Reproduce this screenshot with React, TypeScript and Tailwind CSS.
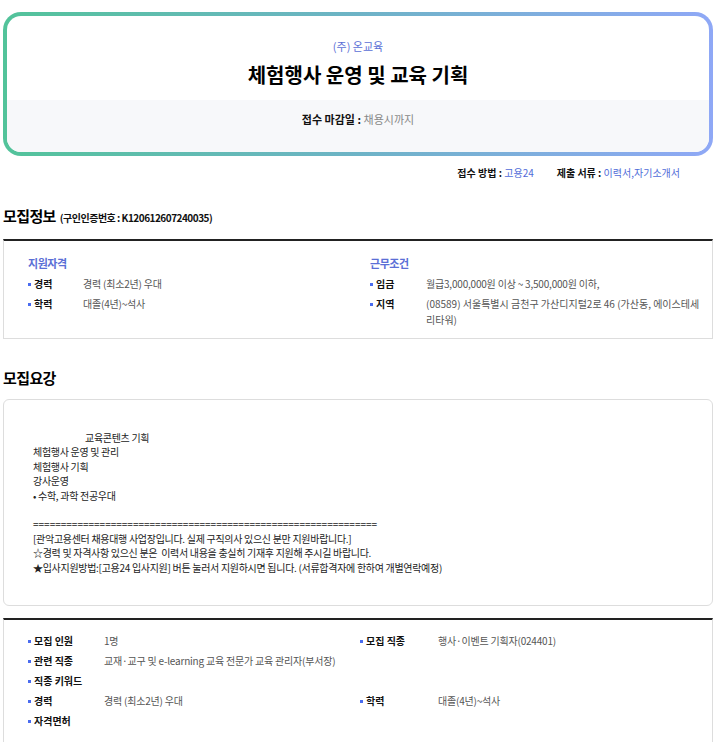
const font = { fontFamily: '"Noto Sans CJK KR", "Noto Sans", sans-serif' };

function Bullet() {
  return <span className="inline-block w-[3px] h-[3px] bg-[#4a6cf0] mr-[3px] align-middle" />;
}

function InfoRow({ label, value, labelW }: { label: string; value?: string; labelW: string }) {
  return (
    <div className="flex items-start leading-[20px]">
      <div className={`${labelW} shrink-0 font-bold text-[#111] flex items-center`}>
        <Bullet />
        <span>{label}</span>
      </div>
      {value && <div className="text-[#555] tracking-[-0.02em]">{value}</div>}
    </div>
  );
}

export default function App() {
  return (
    <div className="bg-white min-h-screen" style={font}>
      <div className="w-[710px] ml-[3px] pt-[12px]">
        {/* 상단 카드 */}
        <div className="rounded-[18px] p-[4px] bg-linear-to-r from-[#52c39a] via-[#6db3c6] to-[#8fa8f6]">
          <div className="rounded-[14px] overflow-hidden bg-white">
            <div className="flex flex-col items-center pt-[23px] pb-[11px]">
              <p className="text-[11px] leading-[14px] text-[#5b6fd6]">(주) 온교육</p>
              <h1 className="mt-[8px] text-[20px] leading-[28px] font-bold text-black">
                체험행사 운영 및 교육 기획
              </h1>
            </div>
            <div className="bg-[#f7f8fa] h-[52px] pt-[12px] text-center text-[11px] leading-[14px]">
              <span className="font-bold text-[#111]">접수 마감일 : </span>
              <span className="text-[#888]">채용시까지</span>
            </div>
          </div>
        </div>

        {/* 접수 방법 */}
        <div className="flex justify-end gap-[23px] pr-[33px] mt-[10px] text-[10px] leading-[14px]">
          <div>
            <span className="font-bold text-[#111]">접수 방법 : </span>
            <span className="text-[#4f6bd8]">고용24</span>
          </div>
          <div>
            <span className="font-bold text-[#111]">제출 서류 : </span>
            <span className="text-[#4f6bd8]">이력서,자기소개서</span>
          </div>
        </div>

        {/* 모집정보 */}
        <div className="flex items-baseline gap-[4px] mt-[25px]">
          <h2 className="text-[15px] leading-[22px] font-bold text-black tracking-[-0.04em]">모집정보</h2>
          <span className="text-[10px] font-bold text-[#111] tracking-[-0.05em]">(구인인증번호 : K120612607240035)</span>
        </div>
        <div className="mt-[12px] border-t-2 border-t-[#222] border-x border-b border-[#ddd] h-[100px] grid grid-cols-[342px_1fr] pl-[24px] pr-[12px] pt-[14px] text-[10px]">
          <div>
            <h3 className="text-[11px] leading-[16px] font-bold text-[#5b6fd6] mb-[3px] tracking-[-0.04em]">지원자격</h3>
            <InfoRow label="경력" value="경력 (최소2년) 우대" labelW="w-[55px]" />
            <InfoRow label="학력" value="대졸(4년)~석사" labelW="w-[55px]" />
          </div>
          <div>
            <h3 className="text-[11px] leading-[16px] font-bold text-[#5b6fd6] mb-[3px] tracking-[-0.04em]">근무조건</h3>
            <InfoRow label="임금" value="월급3,000,000원 이상 ~ 3,500,000원 이하," labelW="w-[56px]" />
            <div className="flex items-start leading-[16px] pt-[2px]">
              <div className="w-[56px] shrink-0 font-bold text-[#111] flex items-center">
                <Bullet />
                <span>지역</span>
              </div>
              <div className="text-[#555]">(08589) 서울특별시 금천구 가산디지털2로 46 (가산동, 에이스테세리타워)</div>
            </div>
          </div>
        </div>

        {/* 모집요강 */}
        <h2 className="mt-[28px] text-[15px] leading-[22px] font-bold text-black tracking-[-0.04em]">모집요강</h2>
        <div className="mt-[10px] border border-[#ddd] rounded-[6px] h-[207px] pl-[29px] pt-[31px] text-[10px] leading-[14.4px] text-[#222] tracking-[-0.03em]">
          <p className="pl-[52px]">교육콘텐츠 기획</p>
          <p>체험행사 운영 및 관리</p>
          <p>체험행사 기획</p>
          <p>강사운영</p>
          <p>• 수학, 과학 전공우대</p>
          <p>&nbsp;</p>
          <p className="tracking-normal">==============================================================</p>
          <p>[관악고용센터 채용대행 사업장입니다. 실제 구직의사 있으신 분만 지원바랍니다.]</p>
          <p>☆경력 및 자격사항 있으신 분은&nbsp; 이력서 내용을 충실히 기재후 지원해 주시길 바랍니다.</p>
          <p>★입사지원방법:[고용24 입사지원] 버튼 눌러서 지원하시면 됩니다. (서류합격자에 한하여 개별연락예정)</p>
        </div>

        {/* 상세 */}
        <div className="mt-[12px] border-t-2 border-t-[#222] border-x border-[#ddd] pl-[24px] pt-[11px] pb-[20px] text-[10px]">
          <div className="grid grid-cols-[332px_1fr]">
            <InfoRow label="모집 인원" value="1명" labelW="w-[76px]" />
            <InfoRow label="모집 직종" value="행사·이벤트 기획자(024401)" labelW="w-[78px]" />
          </div>
          <InfoRow label="관련 직종" value="교재·교구 및 e-learning 교육 전문가 교육 관리자(부서장)" labelW="w-[76px]" />
          <InfoRow label="직종 키워드" labelW="w-[76px]" />
          <div className="grid grid-cols-[332px_1fr]">
            <InfoRow label="경력" value="경력 (최소2년) 우대" labelW="w-[76px]" />
            <InfoRow label="학력" value="대졸(4년)~석사" labelW="w-[78px]" />
          </div>
          <InfoRow label="자격면허" labelW="w-[76px]" />
        </div>
      </div>
    </div>
  );
}
